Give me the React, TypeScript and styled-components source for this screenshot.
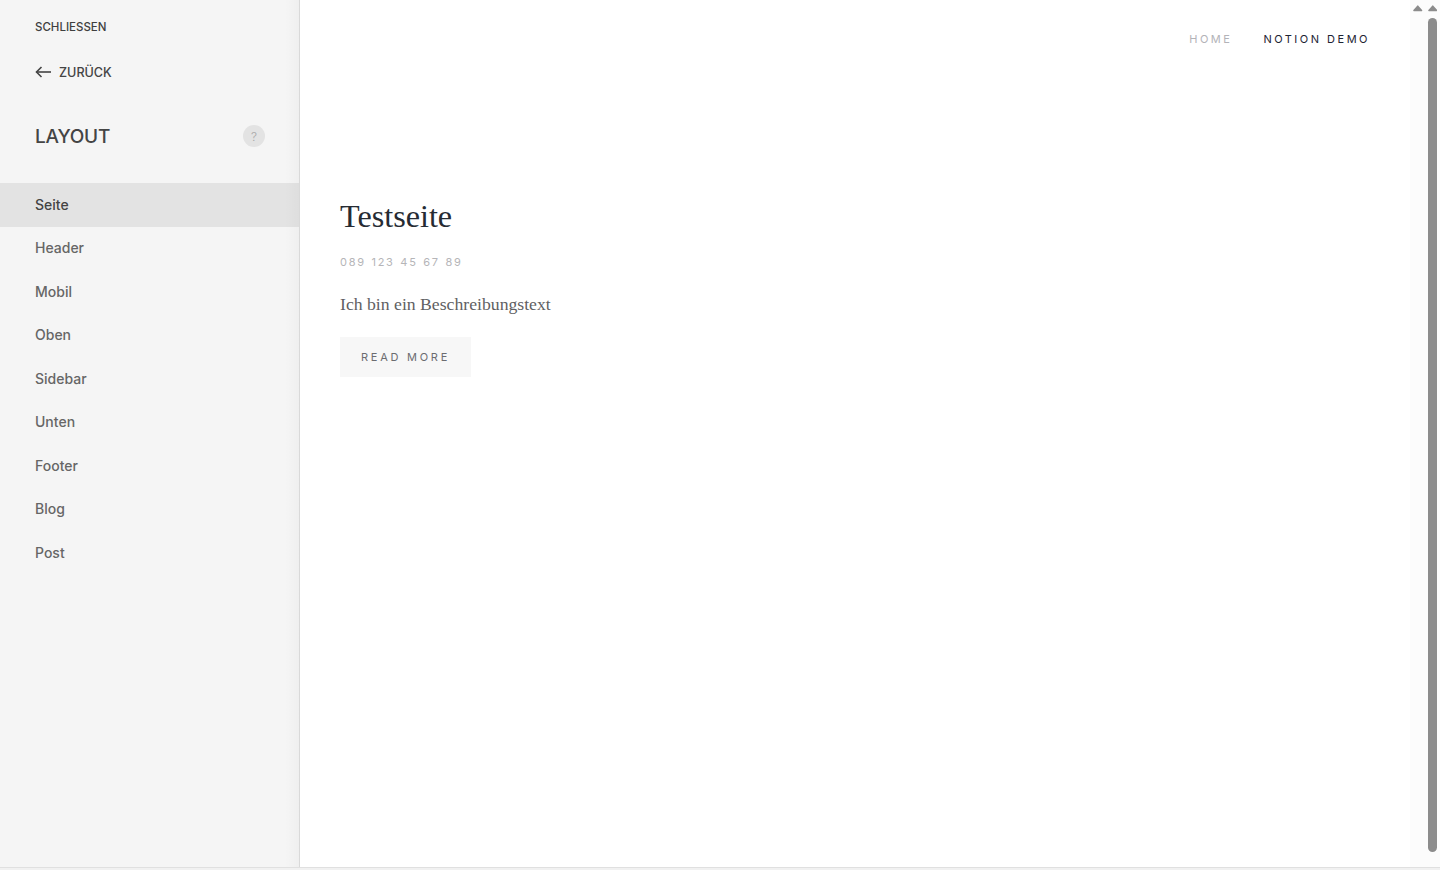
import { createGlobalStyle, styled } from 'styled-components';

const menuItems = ['Seite', 'Header', 'Mobil', 'Oben', 'Sidebar', 'Unten', 'Footer', 'Blog', 'Post'];

const GlobalStyle = createGlobalStyle`
  html,
  body {
    margin: 0;
    height: 100%;
    overflow: hidden;
    background: #fff;
  }
`;

const Page = styled.div`
  display: flex;
  flex-direction: column;
  height: 870px;
  font-family: Inter, 'Liberation Sans', sans-serif;
`;

const Workspace = styled.div`
  display: flex;
  height: 867px;
`;

const BottomStrip = styled.div`
  height: 3px;
  background: #f1f1f1;
  border-top: 1px solid #e0e0e0;
  box-sizing: border-box;
`;

const Sidebar = styled.aside`
  position: relative;
  width: 300px;
  flex-shrink: 0;
  box-sizing: border-box;
  background: #f5f5f5;
  border-right: 1px solid #d9d9d9;
  color: #444;

  &::after {
    content: '';
    position: absolute;
    top: 0;
    right: 0;
    bottom: 0;
    width: 14px;
    background: linear-gradient(to right, rgba(0, 0, 0, 0), rgba(0, 0, 0, 0.025));
    pointer-events: none;
  }
`;

const CloseLink = styled.div`
  padding: 20px 35px 0;
  height: 14px;
  line-height: 14px;
  font-size: 11.5px;
  font-weight: 500;
  color: #3f3f3f;
`;

const BackLink = styled.div`
  display: flex;
  align-items: center;
  gap: 8px;
  margin-top: 30px;
  padding: 0 35px;
  height: 16px;
  font-size: 12.6px;
  font-weight: 500;
  color: #444;
`;

const TitleRow = styled.div`
  display: flex;
  align-items: center;
  justify-content: space-between;
  margin-top: 34px;
  padding: 0 34px 0 35px;
  height: 44px;
`;

const Title = styled.h2`
  margin: 0;
  font-size: 19px;
  font-weight: 500;
  letter-spacing: -0.2px;
  color: #444;
`;

const HelpBadge = styled.span`
  width: 22px;
  height: 22px;
  display: flex;
  align-items: center;
  justify-content: center;
  border-radius: 50%;
  background: #e3e3e3;
  color: #a8a8a8;
  font-size: 12px;
  font-weight: 300;
`;

const Menu = styled.nav`
  margin-top: 25px;
`;

const MenuItem = styled.div<{ $active?: boolean }>`
  height: 43.5px;
  box-sizing: border-box;
  display: flex;
  align-items: center;
  padding: 0 0 1px 35px;
  font-size: 14px;
  font-weight: 500;
  background: ${(p) => (p.$active ? '#e3e3e3' : 'transparent')};
  color: ${(p) => (p.$active ? '#444' : '#666')};
`;

const Preview = styled.main`
  flex: 1;
  min-width: 0;
  background: #fff;
`;

const TopNav = styled.div`
  display: flex;
  justify-content: flex-end;
  gap: 31px;
  padding: 32px 40px 0 0;
  height: 14px;
  line-height: 14px;
`;

const NavLink = styled.span<{ $current?: boolean }>`
  font-size: 11px;
  letter-spacing: 2.5px;
  color: ${(p) => (p.$current ? '#1d2433' : '#b3b3b8')};
`;

const Content = styled.div`
  padding: 152px 0 0 40px;
`;

const Heading = styled.h1`
  margin: 0;
  height: 36px;
  line-height: 36px;
  font-family: 'Liberation Serif', serif;
  font-size: 32.2px;
  font-weight: 400;
  color: #262b33;
`;

const Phone = styled.div`
  margin-top: 21px;
  height: 14px;
  line-height: 14px;
  font-size: 11px;
  letter-spacing: 1.7px;
  word-spacing: 1px;
  color: #b5b5b8;
`;

const Description = styled.p`
  margin: 24px 0 0;
  height: 22px;
  line-height: 22px;
  font-family: 'Liberation Serif', serif;
  font-size: 17.7px;
  color: #5f5f63;
`;

const ReadMore = styled.button`
  display: block;
  width: 131px;
  height: 40px;
  margin-top: 22px;
  padding: 0;
  border: 0;
  background: #f7f7f7;
  font-family: inherit;
  font-size: 11px;
  letter-spacing: 2.75px;
  color: #6c6c70;
`;

const Gutter = styled.div`
  width: 30px;
  flex-shrink: 0;
  box-sizing: border-box;
  padding: 5px 3px 0 3px;
  background: #fcfcfc;
`;

const Arrows = styled.div`
  display: flex;
  justify-content: flex-end;
  gap: 5px;
  height: 13px;
`;

const Thumb = styled.div`
  width: 9px;
  height: 834px;
  margin-left: auto;
  border-radius: 5px;
  background: #8c8c8c;
`;

function ArrowUp() {
  return (
    <svg width="10" height="7" viewBox="0 0 10 7">
      <path
        d="M5 1 L9 5.6 H1 Z"
        fill="#8c8c8c"
        stroke="#8c8c8c"
        strokeWidth="1.6"
        strokeLinejoin="round"
      />
    </svg>
  );
}

function BackArrow() {
  return (
    <svg width="16" height="12" viewBox="0 0 16 12" fill="none" stroke="#444" strokeWidth="1.6">
      <path d="M16 6 H1.5" />
      <path d="M6.5 1 L1.5 6 L6.5 11" />
    </svg>
  );
}

export default function App() {
  return (
    <Page>
      <GlobalStyle />
      <Workspace>
        <Sidebar>
          <CloseLink>SCHLIESSEN</CloseLink>
          <BackLink>
            <BackArrow />
            ZURÜCK
          </BackLink>
          <TitleRow>
            <Title>LAYOUT</Title>
            <HelpBadge>?</HelpBadge>
          </TitleRow>
          <Menu>
            {menuItems.map((item) => (
              <MenuItem key={item} $active={item === 'Seite'}>
                {item}
              </MenuItem>
            ))}
          </Menu>
        </Sidebar>
        <Preview>
          <TopNav>
            <NavLink>HOME</NavLink>
            <NavLink $current>NOTION DEMO</NavLink>
          </TopNav>
          <Content>
            <Heading>Testseite</Heading>
            <Phone>089 123 45 67 89</Phone>
            <Description>Ich bin ein Beschreibungstext</Description>
            <ReadMore>READ MORE</ReadMore>
          </Content>
        </Preview>
        <Gutter>
          <Arrows>
            <ArrowUp />
            <ArrowUp />
          </Arrows>
          <Thumb />
        </Gutter>
      </Workspace>
      <BottomStrip />
    </Page>
  );
}
